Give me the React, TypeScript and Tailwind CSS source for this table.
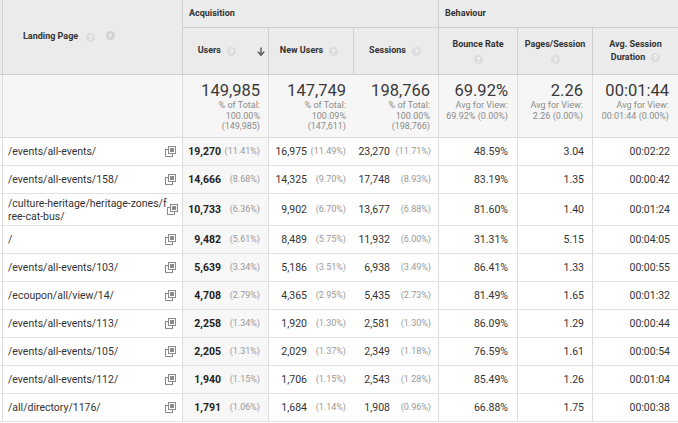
import React from 'react'

type Row = {
  page: string[]
  users: [string, string]
  newUsers: [string, string]
  sessions: [string, string]
  bounce: string
  pages: string
  duration: string
}

const rows: Row[] = [
  { page: ['/events/all-events/'], users: ['19,270', '(11.41%)'], newUsers: ['16,975', '(11.49%)'], sessions: ['23,270', '(11.71%)'], bounce: '48.59%', pages: '3.04', duration: '00:02:22' },
  { page: ['/events/all-events/158/'], users: ['14,666', '(8.68%)'], newUsers: ['14,325', '(9.70%)'], sessions: ['17,748', '(8.93%)'], bounce: '83.19%', pages: '1.35', duration: '00:00:42' },
  { page: ['/culture-heritage/heritage-zones/f', 'ree-cat-bus/'], users: ['10,733', '(6.36%)'], newUsers: ['9,902', '(6.70%)'], sessions: ['13,677', '(6.88%)'], bounce: '81.60%', pages: '1.40', duration: '00:01:24' },
  { page: ['/'], users: ['9,482', '(5.61%)'], newUsers: ['8,489', '(5.75%)'], sessions: ['11,932', '(6.00%)'], bounce: '31.31%', pages: '5.15', duration: '00:04:05' },
  { page: ['/events/all-events/103/'], users: ['5,639', '(3.34%)'], newUsers: ['5,186', '(3.51%)'], sessions: ['6,938', '(3.49%)'], bounce: '86.41%', pages: '1.33', duration: '00:00:55' },
  { page: ['/ecoupon/all/view/14/'], users: ['4,708', '(2.79%)'], newUsers: ['4,365', '(2.95%)'], sessions: ['5,435', '(2.73%)'], bounce: '81.49%', pages: '1.65', duration: '00:01:32' },
  { page: ['/events/all-events/113/'], users: ['2,258', '(1.34%)'], newUsers: ['1,920', '(1.30%)'], sessions: ['2,581', '(1.30%)'], bounce: '86.09%', pages: '1.29', duration: '00:00:44' },
  { page: ['/events/all-events/105/'], users: ['2,205', '(1.31%)'], newUsers: ['2,029', '(1.37%)'], sessions: ['2,349', '(1.18%)'], bounce: '76.59%', pages: '1.61', duration: '00:00:54' },
  { page: ['/events/all-events/112/'], users: ['1,940', '(1.15%)'], newUsers: ['1,706', '(1.15%)'], sessions: ['2,543', '(1.28%)'], bounce: '85.49%', pages: '1.26', duration: '00:01:04' },
  { page: ['/all/directory/1176/'], users: ['1,791', '(1.06%)'], newUsers: ['1,684', '(1.14%)'], sessions: ['1,908', '(0.96%)'], bounce: '66.88%', pages: '1.75', duration: '00:00:38' },
]

// same column template for every row of the table
const cols = 'grid grid-cols-[3px_180px_86px_85px_85px_79px_75px_85px]'

function Help() {
  return (
    <svg width="9" height="9" viewBox="0 0 9 9" className="inline-block shrink-0">
      <circle cx="4.5" cy="4.5" r="4.5" fill="#dcdcdc" />
      <text x="4.5" y="7" textAnchor="middle" fontSize="6.5" fontWeight="700" fill="#fff" fontFamily="Arial, sans-serif">
        ?
      </text>
    </svg>
  )
}

function RemoveDot() {
  return (
    <svg width="9" height="9" viewBox="0 0 9 9" className="shrink-0">
      <circle cx="4.5" cy="4.5" r="4.5" fill="#d2d2d2" />
      <path d="M3 3L6 6M6 3L3 6" stroke="#e9e9e9" strokeWidth="1.2" />
    </svg>
  )
}

function SortDown() {
  return (
    <svg width="8" height="9" viewBox="0 0 8 9" className="shrink-0">
      <path d="M4 0.5V7" stroke="#555" strokeWidth="1.4" />
      <path d="M0.8 4.6L4 8.3L7.2 4.6" fill="none" stroke="#555" strokeWidth="1.4" />
    </svg>
  )
}

function OpenIcon() {
  return (
    <svg width="11" height="11" viewBox="0 0 11 11" className="shrink-0">
      <rect x="0.5" y="3.5" width="7" height="7" fill="#fff" stroke="#8a8a8a" />
      <rect x="3.5" y="0.5" width="7" height="7" fill="#fff" stroke="#8a8a8a" />
      <rect x="5" y="2" width="4" height="4" fill="#8a8a8a" />
    </svg>
  )
}

function Metric({ value, pct, slot, bold }: { value: string; pct: string; slot: string; bold?: boolean }) {
  return (
    <div className="flex items-center justify-end">
      <span className={bold ? 'font-bold text-[#222]' : ''}>{value}</span>
      <span className={`${slot} text-right text-[9px] text-[#999]`}>{pct}</span>
    </div>
  )
}

function Total({ value, lines, pr }: { value: string; lines: string[]; pr: string }) {
  return (
    <div className={`flex flex-col items-end pt-[6px] ${pr}`}>
      <span className="text-[16.5px] leading-[19px] text-[#3a3a3a]">{value}</span>
      {lines.map((l) => (
        <span key={l} className="whitespace-nowrap text-[9px] leading-[10.5px] text-[#8c8c8c]">
          {l}
        </span>
      ))}
    </div>
  )
}

export default function App() {
  return (
    <div className="w-[678px] h-[423px] overflow-hidden bg-white font-[Roboto,Arial,sans-serif] text-[10.5px] text-[#333]">
      {/* header */}
      <div className={`${cols} grid-rows-[28px_47px] bg-[#ebebeb] text-[9px] font-bold text-[#333]`}>
        <div className="row-span-2 border-r border-b border-[#cfcfcf]" />
        <div className="row-span-2 flex items-center gap-[8px] border-r border-b border-[#cfcfcf] pl-[20px]">
          <span>Landing Page</span>
          <Help />
          <span className="-mt-[4px] ml-[3px]">
            <RemoveDot />
          </span>
        </div>
        <div className="col-span-3 flex items-center border-r border-b border-[#cfcfcf] pl-[6px]">Acquisition</div>
        <div className="col-span-3 flex items-center border-b border-[#cfcfcf] pl-[6px]">Behaviour</div>

        <div className="flex items-center justify-end border-r border-b border-[#cfcfcf] pr-[3px]">
          <span>Users</span>
          <span className="ml-[6px] mr-[21px] flex">
            <Help />
          </span>
          <SortDown />
        </div>
        <div className="flex items-center justify-center gap-[6px] border-r border-b border-[#cfcfcf] pr-[4px]">
          <span>New Users</span>
          <Help />
        </div>
        <div className="flex items-center justify-center gap-[6px] border-r border-b border-[#cfcfcf] pr-[2px]">
          <span>Sessions</span>
          <Help />
        </div>
        <div className="flex flex-col items-center justify-center gap-[4px] border-r border-b border-[#cfcfcf]">
          <span>Bounce Rate</span>
          <Help />
        </div>
        <div className="flex flex-col items-center justify-center gap-[4px] border-r border-b border-[#cfcfcf]">
          <span>Pages/Session</span>
          <Help />
        </div>
        <div className="flex flex-col items-center justify-center border-b border-[#cfcfcf] leading-[13px]">
          <span>Avg. Session</span>
          <span className="flex items-center gap-[6px]">
            Duration <Help />
          </span>
        </div>
      </div>

      {/* totals */}
      <div className={`${cols} h-[63px] border-b border-[#dcdcdc] bg-[#f6f6f6]`}>
        <div className="border-r border-[#dcdcdc]" />
        <div className="border-r border-[#dcdcdc]" />
        <div className="border-r border-[#dcdcdc]">
          <Total value="149,985" lines={['% of Total:', '100.00%', '(149,985)']} pr="pr-[8px]" />
        </div>
        <Total value="147,749" lines={['% of Total:', '100.09%', '(147,611)']} pr="pr-[8px]" />
        <div className="border-r border-[#dcdcdc]">
          <Total value="198,766" lines={['% of Total:', '100.00%', '(198,766)']} pr="pr-[8px]" />
        </div>
        <div className="border-r border-[#dcdcdc]">
          <Total value="69.92%" lines={['Avg for View:', '69.92% (0.00%)']} pr="pr-[9px]" />
        </div>
        <div className="border-r border-[#dcdcdc]">
          <Total value="2.26" lines={['Avg for View:', '2.26 (0.00%)']} pr="pr-[9px]" />
        </div>
        <Total value="00:01:44" lines={['Avg for View:', '00:01:44 (0.00%)']} pr="pr-[9px]" />
      </div>

      {/* rows */}
      {rows.map((r) => (
        <div
          key={r.page.join('')}
          className={`${cols} ${r.page.length > 1 ? 'h-[32px]' : 'h-[28px]'} border-b border-[#e2e2e2] items-stretch`}
        >
          <div className="border-r border-[#dcdcdc]" />
          <div className="flex items-center justify-between border-r border-[#dcdcdc] pl-[5px] pr-[6px]">
            <span className="whitespace-nowrap leading-[13px] text-[#333]">
              {r.page.map((line, i) => (
                <React.Fragment key={line}>
                  {i > 0 && <br />}
                  {line}
                </React.Fragment>
              ))}
            </span>
            <OpenIcon />
          </div>
          <div className="flex items-center justify-end border-r border-[#dcdcdc] bg-[#f7f7f7] pr-[8px]">
            <Metric value={r.users[0]} pct={r.users[1]} slot="w-[39px]" bold />
          </div>
          <div className="flex items-center justify-end pr-[8px]">
            <Metric value={r.newUsers[0]} pct={r.newUsers[1]} slot="w-[39px]" />
          </div>
          <div className="flex items-center justify-end border-r border-[#dcdcdc] pr-[7px]">
            <Metric value={r.sessions[0]} pct={r.sessions[1]} slot="w-[41px]" />
          </div>
          <div className="flex items-center justify-end border-r border-[#dcdcdc] pr-[9px]">{r.bounce}</div>
          <div className="flex items-center justify-end border-r border-[#dcdcdc] pr-[8px]">{r.pages}</div>
          <div className="flex items-center justify-end pr-[8px]">{r.duration}</div>
        </div>
      ))}
    </div>
  )
}
